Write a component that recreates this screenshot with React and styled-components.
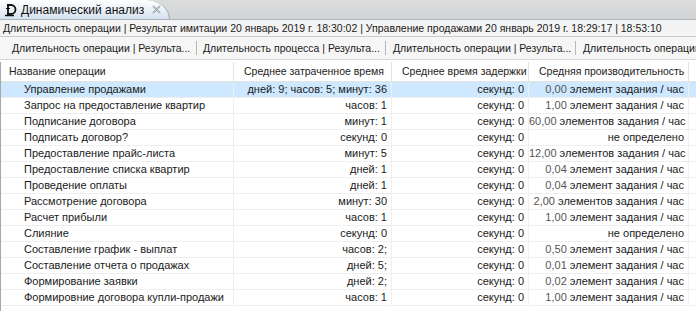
import React from "react";
import styled, { createGlobalStyle } from "styled-components";

const Global = createGlobalStyle`
  html, body { margin: 0; padding: 0; background: #fff; }
  body { font-family: "Liberation Sans", Arial, sans-serif; font-size: 11px; color: #1a1a1a; overflow: hidden; }
  * { box-sizing: border-box; }
`;

const Page = styled.div`
  width: 696px;
  height: 311px;
  display: flex;
  flex-direction: column;
  overflow: hidden;
`;

const TabStrip = styled.div`
  height: 20px;
  flex: 0 0 20px;
  display: flex;
  align-items: flex-end;
  background: linear-gradient(#dcdcdc, #d2d4d7);
  border-bottom: 1px solid #a9b2bd;
`;

const Tab = styled.div`
  height: 19px;
  width: 170px;
  display: flex;
  align-items: center;
  gap: 4px;
  padding-left: 4px;
  background: linear-gradient(#ffffff, #d6e2f0);
  border-top-right-radius: 24px 19px;
  border-right: 1px solid #9aa7b6;
  color: #111;
  font-size: 12px;
  white-space: nowrap;
`;

const CloseBox = styled.span`
  display: inline-flex;
  margin-left: 3px;
`;

const TitleBar = styled.div`
  height: 17px;
  flex: 0 0 17px;
  display: flex;
  align-items: center;
  padding-left: 3px;
  background: #f4f4f4;
  border-bottom: 1px solid #c9c9c9;
  white-space: nowrap;
  overflow: hidden;
  font-size: 10.5px;
`;

const SubTabs = styled.div`
  height: 23px;
  flex: 0 0 23px;
  display: flex;
  align-items: center;
  background: #f6f6f6;
  border-bottom: 1px solid #d4d4d4;
  white-space: nowrap;
  overflow: hidden;
  font-size: 10.5px;
`;

const SubTab = styled.div`
  flex: 0 0 ${(p) => p.$w}px;
  padding-left: ${(p) => p.$pad}px;
  border-right: ${(p) => (p.$last ? "none" : "1px solid #b8b8b8")};
  height: 14px;
  line-height: 14px;
  overflow: hidden;
`;

const TableWrap = styled.div`
  flex: 1;
  display: flex;
  padding-top: 2px;
  background: #fff;
`;

const LeftEdge = styled.div`
  width: 3px;
  background: #c9c9c9;
  border-right: 1px solid #a8a8a8;
`;

const Table = styled.div`
  flex: 1;
  display: grid;
  grid-template-columns: 233px 158px 137px 160px 1fr;
  grid-template-rows: 20px;
  grid-auto-rows: 16px;
  align-content: start;
`;

const HeadCell = styled.div`
  line-height: 19px;
  padding: 0 0 0 ${(p) => (p.$first ? 8 : 10)}px;
  border-right: 1px solid #e3e3e3;
  border-bottom: 1px solid #e3e3e3;
  white-space: nowrap;
  overflow: hidden;
  color: #222;
  font-size: 10.5px;
`;

const Row = styled.div`
  display: contents;
`;

const Cell = styled.div`
  height: 16px;
  line-height: 15px;
  border-bottom: 1px solid #efefef;
  border-right: 1px solid #efefef;
  background: ${(p) => (p.$sel ? "#cde8ff" : "#fff")};
  text-align: ${(p) => (p.$left ? "left" : "right")};
  padding: ${(p) => (p.$left ? "0 0 0 23px" : "0 4px 0 0")};
  white-space: nowrap;
  overflow: hidden;
  color: #1a1a1a;
`;

const Num = styled.span`
  color: #555;
`;

const rows = [
  ["Управление продажами", "дней: 9; часов: 5; минут: 36", "0,00", "элемент задания / час"],
  ["Запрос на предоставление квартир", "часов: 1", "1,00", "элемент задания / час"],
  ["Подписание договора", "минут: 1", "60,00", "элементов задания / час"],
  ["Подписать договор?", "секунд: 0", null, "не определено"],
  ["Предоставление прайс-листа", "минут: 5", "12,00", "элементов задания / час"],
  ["Предоставление списка квартир", "дней: 1", "0,04", "элемент задания / час"],
  ["Проведение оплаты", "дней: 1", "0,04", "элемент задания / час"],
  ["Рассмотрение договора", "минут: 30", "2,00", "элементов задания / час"],
  ["Расчет прибыли", "часов: 1", "1,00", "элемент задания / час"],
  ["Слияние", "секунд: 0", null, "не определено"],
  ["Составление график - выплат", "часов: 2;", "0,50", "элемент задания / час"],
  ["Составление отчета о продажах", "дней: 5;", "0,01", "элемент задания / час"],
  ["Формирование заявки", "дней: 2;", "0,02", "элемент задания / час"],
  ["Формировние договора купли-продажи", "часов: 1", "1,00", "элемент задания / час"],
];

const TabIcon = () => (
  <svg width="13" height="14" viewBox="0 0 13 14">
    <path d="M3 2 H7 A4.5 4.5 0 0 1 7 11 H3" fill="none" stroke="#111" strokeWidth="1.8" />
    <path d="M4 1 V12" stroke="#111" strokeWidth="1.8" />
    <path d="M1 12.5 H10" stroke="#111" strokeWidth="1.5" />
    <path d="M2 5.5 H6" stroke="#111" strokeWidth="1" />
  </svg>
);

const CloseIcon = () => (
  <svg width="11" height="11" viewBox="0 0 11 11">
    <path d="M2 2 L9 9 M9 2 L2 9" stroke="#8a8f96" strokeWidth="1.6" />
    <path d="M2 2 L9 9 M9 2 L2 9" stroke="#e8ecf0" strokeWidth="0.5" />
  </svg>
);

export default function App() {
  return (
    <Page>
      <Global />
      <TabStrip>
        <Tab>
          <TabIcon />
          <span>Динамический анализ</span>
          <CloseBox><CloseIcon /></CloseBox>
        </Tab>
      </TabStrip>
      <TitleBar>
        Длительность операции | Результат имитации 20 январь 2019 г. 18:30:02 | Управление продажами 20 январь 2019 г. 18:29:17 | 18:53:10
      </TitleBar>
      <SubTabs>
        <SubTab $w={197} $pad={12}>Длительность операции | Результа...</SubTab>
        <SubTab $w={189} $pad={6}>Длительность процесса | Результа...</SubTab>
        <SubTab $w={190} $pad={7}>Длительность операции | Результа...</SubTab>
        <SubTab $w={200} $pad={7} $last>Длительность операции | Результа...</SubTab>
      </SubTabs>
      <TableWrap>
        <LeftEdge />
        <Table>
          <HeadCell $first>Название операции</HeadCell>
          <HeadCell>Среднее затраченное время</HeadCell>
          <HeadCell>Среднее время задержки</HeadCell>
          <HeadCell>Средняя производительность</HeadCell>
          <HeadCell />
          {rows.map((r, i) => (
            <Row key={i}>
              <Cell $left $sel={i === 0}>{r[0]}</Cell>
              <Cell $sel={i === 0}>{r[1]}</Cell>
              <Cell $sel={i === 0}>секунд: 0</Cell>
              <Cell $sel={i === 0}>
                {r[2] ? <><Num>{r[2]}</Num> {r[3]}</> : r[3]}
              </Cell>
              <Cell $sel={i === 0} />
            </Row>
          ))}
        </Table>
      </TableWrap>
    </Page>
  );
}
